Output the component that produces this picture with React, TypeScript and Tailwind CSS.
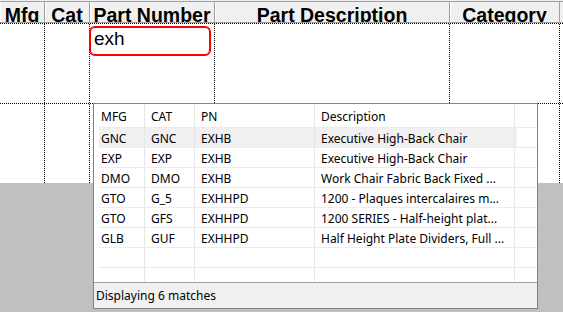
import React from 'react';

// main grid columns (width includes the right border line)
const cols = [
  { label: 'Mfg', w: 'w-[45px]' },
  { label: 'Cat', w: 'w-[45px]' },
  { label: 'Part Number', w: 'w-[125px]' },
  { label: 'Part Description', w: 'w-[235px]' },
  { label: 'Category', w: 'w-[110px]' },
];

const matches = [
  ['GNC', 'GNC', 'EXHB', 'Executive High-Back Chair'],
  ['EXP', 'EXP', 'EXHB', 'Executive High-Back Chair'],
  ['DMO', 'DMO', 'EXHB', 'Work Chair Fabric Back Fixed ...'],
  ['GTO', 'G_5', 'EXHHPD', '1200 - Plaques intercalaires m...'],
  ['GTO', 'GFS', 'EXHHPD', '1200 SERIES - Half-height plat...'],
  ['GLB', 'GUF', 'EXHHPD', 'Half Height Plate Dividers, Full ...'],
  ['', '', '', ''],
  ['', '', '', ''],
];

function MatchRow({ cells, header = false, active = false }: { cells: string[]; header?: boolean; active?: boolean }) {
  const pad = header ? 'pt-[3px]' : 'pt-[3px]';
  return (
    <div className={`flex border-b border-[#ececec] ${header ? 'h-[24px]' : 'h-[20px]'}`}>
      <div className={`flex w-[418px] ${active ? 'bg-[#f0f0f0]' : ''}`}>
        <div className={`w-[46px] border-r border-[#e6e6e6] pl-[2px] ${pad} flex items-center whitespace-nowrap`}>{cells[0]}</div>
        <div className={`w-[50px] border-r border-[#e6e6e6] pl-[6px] ${pad} flex items-center whitespace-nowrap`}>{cells[1]}</div>
        <div className={`w-[120px] border-r border-[#e6e6e6] pl-[6px] ${pad} flex items-center whitespace-nowrap`}>{cells[2]}</div>
        <div className={`w-[200px] border-r border-[#e6e6e6] pl-[6px] ${pad} flex items-center whitespace-nowrap overflow-hidden`}>{cells[3]}</div>
      </div>
    </div>
  );
}

export default function App() {
  return (
    <div className="relative w-[563px] h-[312px] overflow-hidden bg-[#c0c0c0]">
      <div className="bg-white">
        {/* column headers */}
        <div className="pt-px bg-[#f0f0f0]">
          <div className="flex h-[22px] border-y border-[#a0a0a0] font-['Liberation_Sans',Arial,sans-serif] font-bold text-[19.5px] leading-none text-black">
            {cols.map(c => (
              <div key={c.label} className={`${c.w} border-r border-[#a0a0a0] shadow-[inset_1px_0_0_#ffffff] overflow-hidden text-center whitespace-nowrap pt-[4px]`}>
                {c.label}
              </div>
            ))}
            <div className="flex-1" />
          </div>
        </div>

        {/* row 1 - editing */}
        <div className="flex h-[81px] border-y border-dotted border-black">
          <div className="w-[45px] border-r border-dotted border-black" />
          <div className="w-[45px] border-r border-dotted border-black" />
          <div className="w-[125px] border-r border-dotted border-black pt-[2px]">
            <div className="-ml-px w-[122px] h-[30px] border-2 border-[#ff0000] rounded-[6px] pl-[3px] font-['Liberation_Sans',Arial,sans-serif] text-[19px] leading-none text-black pt-px">
              exh
            </div>
          </div>
          <div className="w-[235px] border-r border-dotted border-black" />
          <div className="w-[110px] border-r border-dotted border-black" />
          <div className="flex-1" />
        </div>

        {/* row 2 */}
        <div className="flex h-[79px]">
          <div className="w-[45px] border-r border-dotted border-black" />
          <div className="w-[45px] border-r border-dotted border-black" />
          <div className="w-[125px] border-r border-dotted border-black" />
          <div className="w-[235px] border-r border-dotted border-black" />
          <div className="w-[110px] border-r border-dotted border-black" />
          <div className="flex-1" />
        </div>
      </div>

      {/* autocomplete dropdown */}
      <div className="absolute left-[93px] top-[103px] w-[445px] h-[206px] border border-[#828282] bg-white flex flex-col font-['Noto_Sans',sans-serif] text-[12px] text-black">
        <div className="h-[178px] overflow-hidden pl-[5px]">
          <MatchRow header cells={['MFG', 'CAT', 'PN', 'Description']} />
          {matches.map((m, i) => (
            <MatchRow key={i} cells={m} active={i === 0} />
          ))}
        </div>
        <div className="h-[26px] border-t border-[#a0a0a0] bg-[#f0f0f0] pl-[2px] flex items-center">
          Displaying 6 matches
        </div>
      </div>
    </div>
  );
}
